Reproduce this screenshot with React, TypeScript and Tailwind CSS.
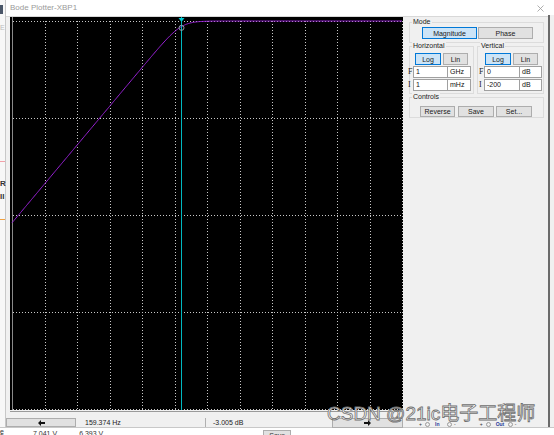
import React from 'react';

// plot geometry (relative to the black area, which is 393 x 393)
const DECADE = 32.5;
const X0 = 2;
const Y0 = 4;
const YSPAN = 388;
const FC = 159;

const fx = (f: number) => X0 + DECADE * Math.log10(f / 1e-3);
const dy = (db: number) => Y0 + (-db / 200) * YSPAN;

const curvePoints = () => {
  const pts: string[] = [];
  for (let i = 0; i <= 400; i++) {
    const f = Math.pow(10, -3 + (i / 400) * 12);
    const db = -10 * Math.log10(1 + (FC / f) ** 2);
    pts.push(`${fx(f).toFixed(2)},${Math.max(dy(db), Y0).toFixed(2)}`);
  }
  return pts.join(' ');
};

const Plot = () => {
  const cx = Math.round(fx(159.374)) + 0.5;
  const cy = dy(-3.005) + 1;
  return (
    <svg width={393} height={393} className="block bg-black">
      <line x1={2.5} y1={0} x2={2.5} y2={393} stroke="#8a8a8a" strokeWidth={1} />
      {Array.from({ length: 12 }, (_, k) => (
        <line
          key={`v${k}`}
          x1={Math.round(X0 + DECADE * (k + 1)) + 0.5}
          y1={Y0}
          x2={Math.round(X0 + DECADE * (k + 1)) + 0.5}
          y2={392}
          stroke="#c8c8c8"
          strokeWidth={1}
          strokeDasharray="1 2"
        />
      ))}
      {Array.from({ length: 5 }, (_, k) => (
        <line
          key={`h${k}`}
          x1={3}
          y1={Y0 + 97 * k + 0.5}
          x2={392}
          y2={Y0 + 97 * k + 0.5}
          stroke="#c8c8c8"
          strokeWidth={1}
          strokeDasharray="1 2"
        />
      ))}
      <polyline points={curvePoints()} fill="none" stroke="#9a22d8" strokeWidth={1} />
      <line x1={cx} y1={0} x2={cx} y2={393} stroke="#00b8c0" strokeWidth={1} />
      <polygon points={`${cx - 3},1 ${cx + 3},1 ${cx},5`} fill="#00c8d0" />
      <circle cx={cx} cy={cy} r={2.5} fill="none" stroke="#8fa0a8" strokeWidth={1} />
    </svg>
  );
};

const Btn = ({
  children,
  active = false,
  className = '',
}: {
  children: React.ReactNode;
  active?: boolean;
  className?: string;
}) => (
  <div
    className={`flex items-center justify-center border text-[7px] leading-none text-[#1a1a1a] ${
      active ? 'bg-[#cce4f7] border-[#0078d7]' : 'bg-[#e1e1e1] border-[#adadad]'
    } ${className}`}
  >
    {children}
  </div>
);

const Group = ({
  label,
  className = '',
  children,
}: {
  label: string;
  className?: string;
  children?: React.ReactNode;
}) => (
  <div className={`relative border border-[#dcdcdc] ${className}`}>
    <span className="absolute -top-[5px] left-[2px] px-[1px] bg-[#f0f0f0] text-[7px] leading-[8px] text-[#222]">
      {label}
    </span>
    {children}
  </div>
);

const Field = ({ value, className = '' }: { value: string; className?: string }) => (
  <div
    className={`h-[12px] bg-white border border-[#a0a0a0] pl-[2px] text-[7px] leading-[10px] text-[#111] ${className}`}
  >
    {value}
  </div>
);

const Tag = ({ children, className = '' }: { children: React.ReactNode; className?: string }) => (
  <span className={`font-['Liberation_Serif',serif] text-[8px] leading-[12px] text-[#222] ${className}`}>
    {children}
  </span>
);

const Panel = () => (
  <div className="w-[145px] pl-[6px] pt-[5px]">
    <Group label="Mode" className="w-[135px] h-[21px]">
      <div className="flex pl-[12px] pt-[4px]">
        <Btn active className="w-[55px] h-[12px]">Magnitude</Btn>
        <Btn className="w-[55px] h-[12px] ml-[1px]">Phase</Btn>
      </div>
    </Group>

    <div className="flex gap-[3px] mt-[3px]">
      <Group label="Horizontal" className="w-[65px] h-[48px]">
        <div className="flex pl-[5px] pt-[6px]">
          <Btn active className="w-[26px] h-[12px]">Log</Btn>
          <Btn className="w-[25px] h-[12px] ml-[2px]">Lin</Btn>
        </div>
        <div className="flex items-center mt-[1px]">
          <Tag className="w-[5px] -ml-[2px]">F</Tag>
          <Field value="1" className="w-[35px]" />
          <Field value="GHz" className="w-[24px] -ml-[1px]" />
        </div>
        <div className="flex items-center mt-[1px]">
          <Tag className="w-[5px] -ml-[2px]">I</Tag>
          <Field value="1" className="w-[35px]" />
          <Field value="mHz" className="w-[24px] -ml-[1px]" />
        </div>
      </Group>

      <Group label="Vertical" className="w-[67px] h-[48px]">
        <div className="flex pl-[7px] pt-[6px]">
          <Btn active className="w-[26px] h-[12px]">Log</Btn>
          <Btn className="w-[25px] h-[12px] ml-[2px]">Lin</Btn>
        </div>
        <div className="flex items-center mt-[1px] pl-[1px]">
          <Tag className="w-[5px]">F</Tag>
          <Field value="0" className="w-[36px]" />
          <Field value="dB" className="w-[23px] -ml-[1px]" />
        </div>
        <div className="flex items-center mt-[1px] pl-[1px]">
          <Tag className="w-[5px]">I</Tag>
          <Field value="-200" className="w-[36px]" />
          <Field value="dB" className="w-[23px] -ml-[1px]" />
        </div>
      </Group>
    </div>

    <Group label="Controls" className="w-[135px] h-[21px] mt-[3px]">
      <div className="flex pl-[10px] pt-[8px]">
        <Btn className="w-[35px] h-[11px]">Reverse</Btn>
        <Btn className="w-[36px] h-[11px] ml-[3px]">Save</Btn>
        <Btn className="w-[36px] h-[11px] ml-[2px]">Set...</Btn>
      </div>
    </Group>
  </div>
);

const Arrow = ({ dir }: { dir: 'left' | 'right' }) => (
  <svg width={7} height={6} viewBox="0 0 7 6" className={dir === 'right' ? 'rotate-180' : ''}>
    <polygon points="0,3 3,0 3,2 7,2 7,4 3,4 3,6" fill="#111" />
  </svg>
);

const Terminal = ({ label, className = '' }: { label: string; className?: string }) => (
  <div className={`flex items-center text-[5px] leading-none ${className}`}>
    <span className="w-[6px] text-[#333]">+</span>
    <span className="w-[5px] h-[5px] rounded-full border border-[#9a9a9a]" />
    <span className="ml-[5px] w-[12px] text-[#2a3a9a] font-bold">{label}</span>
    <span className="w-[5px] h-[5px] rounded-full border border-[#9a9a9a]" />
    <span className="ml-[2px] text-[#333]">-</span>
  </div>
);

const StatusBar = () => (
  <div className="flex items-center h-[9px] text-[7px] leading-none text-[#222]">
    <Btn className="w-[70px] h-[9px] bg-[#dcdcdc]">
      <Arrow dir="left" />
    </Btn>
    <div className="w-[129px] pl-[9px]">159.374 Hz</div>
    <div className="w-[1px] h-[9px] bg-[#b0b0b0]" />
    <div className="w-[126px] pl-[7px]">-3.005 dB</div>
    <Btn className="w-[71px] h-[10px] bg-[#dcdcdc]">
      <Arrow dir="right" />
    </Btn>
    <Terminal label="In" className="ml-[16px] mt-[4px]" />
    <Terminal label="Out" className="ml-[24px] mt-[4px]" />
  </div>
);

const LeftStrip = () => (
  <div className="w-[6px] h-[427px] bg-[#f7f7f7] border-r border-[#c8c8c8] flex flex-col text-[7px] leading-none">
    <div className="mt-[5px] w-[3px] h-[9px] bg-[#4a5668]" />
    <div className="mt-[10px] w-[4px] h-[5px] text-[#bbb]">E</div>
    <div className="mt-[132px] w-[5px] h-[1px] bg-[#f2a0a8]" />
    <div className="mt-[18px] text-[#333] font-bold text-[8px]">R</div>
    <div className="mt-[5px] text-[#333] font-bold text-[8px]">II</div>
    <div className="mt-[18px] w-[5px] h-[1px] bg-[#f0a040]" />
  </div>
);

const RightStrip = () => (
  <div className="w-[6px] h-[427px] flex flex-col">
    <div className="h-[15px] bg-white" />
    <div className="flex-1 flex bg-[#f0f0f0]">
      <div className="w-[2px] bg-[#6a6a6a]" />
    </div>
  </div>
);

const BottomStrip = () => (
  <div className="h-[8px] flex bg-white border-t border-[#c8c8c8] text-[7px] leading-none text-[#333] overflow-hidden">
    <div className="w-[6px] flex flex-col">
      <span>e</span>
      <span className="-mt-[2px]">5 s</span>
    </div>
    <span className="ml-[27px] mt-[2px]">7.041 V</span>
    <span className="ml-[22px] mt-[2px]">6.393 V</span>
    <div className="ml-[160px] mt-[2px] w-[28px] h-[10px] bg-[#e1e1e1] border border-[#adadad] flex justify-center pt-[1px]">
      Save
    </div>
  </div>
);

export default function App() {
  return (
    <div className="relative w-[554px] h-[435px] overflow-hidden bg-white font-['Liberation_Sans',Arial,sans-serif]">
      <div className="flex">
        <LeftStrip />
        <div className="w-[542px] h-[427px] flex flex-col bg-[#f0f0f0]">
          <div className="h-[17px] bg-white flex items-center justify-between pl-[4px] pr-[4px] border-b border-[#d8d8d8]">
            <span className="text-[8px] text-[#9a9a9a]">Bode Plotter-XBP1</span>
            <svg width={7} height={7} viewBox="0 0 7 7">
              <path d="M0.5 0.5 L6.5 6.5 M6.5 0.5 L0.5 6.5" stroke="#9a9a9a" strokeWidth={0.8} />
            </svg>
          </div>
          <div className="flex h-[394px]">
            <div className="pl-[4px]">
              <Plot />
            </div>
            <Panel />
          </div>
          <div className="h-[1px] bg-[#9a9a9a] ml-[4px] w-[393px]" />
          <div className="h-[6px]" />
          <StatusBar />
        </div>
        <RightStrip />
      </div>
      <BottomStrip />

      <div className="absolute left-[327px] top-[404px] text-[19px] leading-none whitespace-nowrap text-white/90 [-webkit-text-stroke:0.8px_#6e6e6e] font-['Liberation_Sans','Noto_Sans_CJK_SC',sans-serif]">
        CSDN @21ic电子工程师
      </div>
    </div>
  );
}
